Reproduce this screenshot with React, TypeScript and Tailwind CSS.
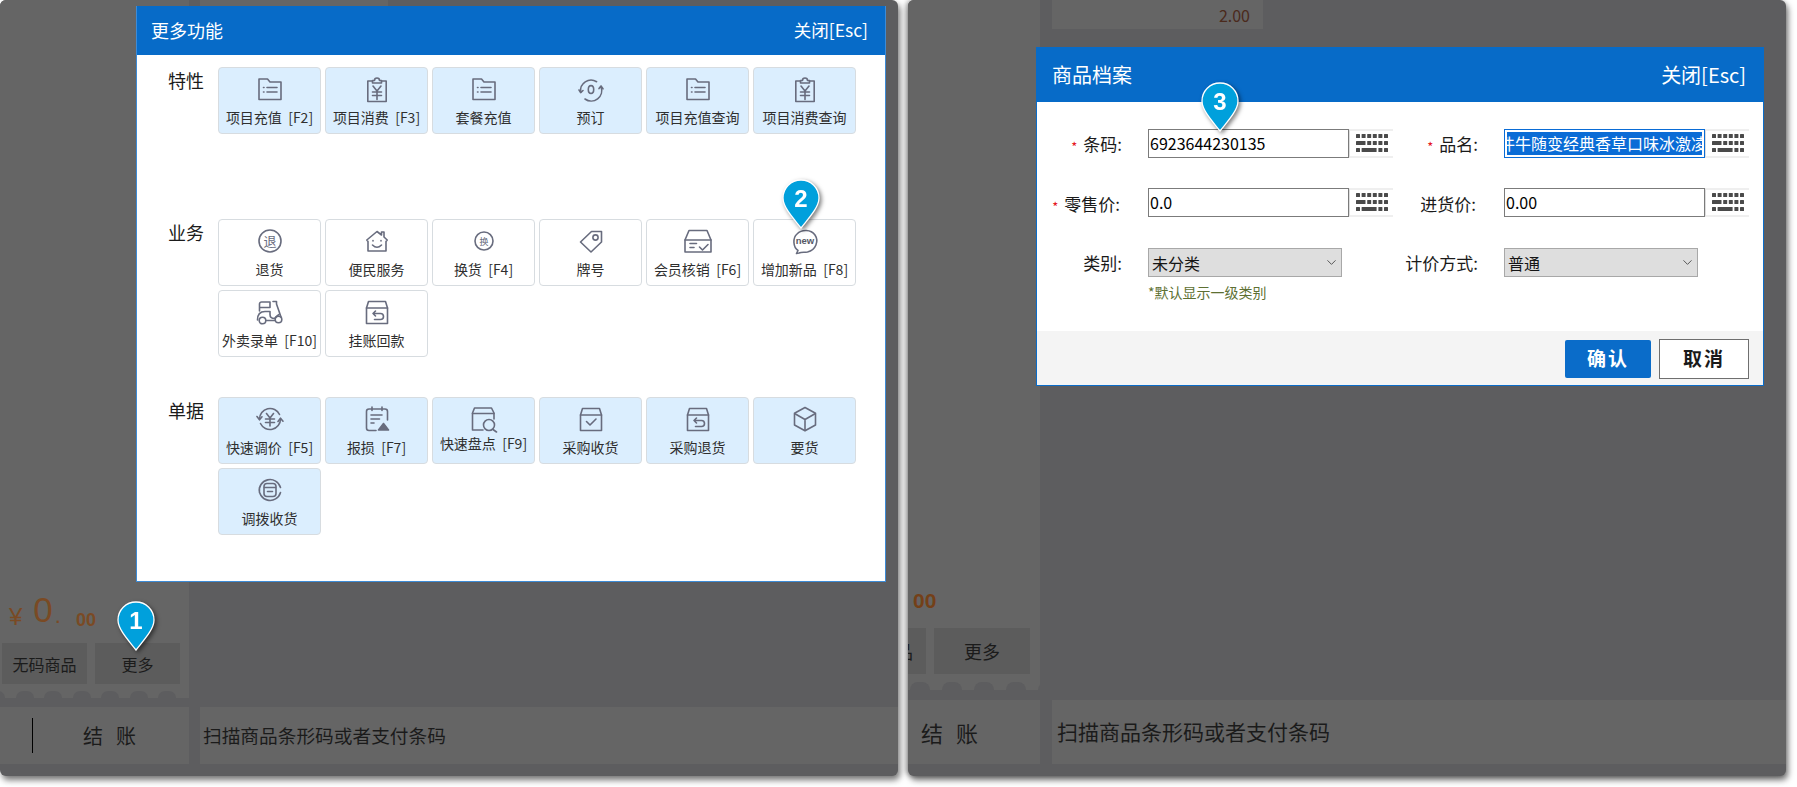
import React from "react";
import { ChevronDown } from "lucide-react";

const C = "#686c7e";
const base = { fill: "none", stroke: C, strokeWidth: 1.6, strokeLinecap: "round" as const, strokeLinejoin: "round" as const };
const Svg = ({ children }: { children: React.ReactNode }) => (
  <svg width="28" height="28" viewBox="0 0 28 28" {...base}>{children}</svg>
);

const IFolder = () => (
  <Svg>
    <path d="M3 24.5V4H11.5L14 7H25V24.5Z" />
    <path d="M7.5 12.5H8M7.5 17H8M11 12.5H21M11 17H21" />
  </Svg>
);
const IClip = () => (
  <Svg>
    <path d="M9.5 6H4.8V26.5H23.2V6H18.5" />
    <path d="M9.5 8V5.5H11.5A2.5 2.5 0 0 1 16.5 5.5H18.5V8Z" />
    <path d="M10 11L14 16L18 11M9.5 17H18.5M9.5 20.5H18.5M14 16V24.5" />
  </Svg>
);
const IOrder = () => (
  <Svg>
    <path d="M3.7 17.3A10.5 10.5 0 0 1 19.6 6.7" />
    <path d="M24 11.7A10.5 10.5 0 0 1 8 24" />
    <path d="M2 15L3.7 17.6L6 15.5M22 13.6L24 11L26 13.8" />
    <ellipse cx="14" cy="14.5" rx="2.7" ry="3.9" />
  </Svg>
);
const ITui = () => (
  <Svg>
    <circle cx="14" cy="14" r="11" />
    <text x="14" y="19" textAnchor="middle" fontSize="13" fill={C} stroke="none">退</text>
  </Svg>
);
const IHome = () => (
  <Svg>
    <path d="M5 14.5L3.8 13L14 4.5L18.5 8V5H21V10L24.2 13L23 14.5V24H5Z" />
    <path d="M10 13.5V14M18 13.5V14M9.5 18Q14 22.5 18.5 18" />
  </Svg>
);
const IHuan = () => (
  <Svg>
    <circle cx="14" cy="14" r="9" />
    <text x="14" y="17.5" textAnchor="middle" fontSize="9" fill={C} stroke="none">换</text>
  </Svg>
);
const ITag = () => (
  <Svg>
    <path d="M14.5 4.5H24.5V15L14 25L3.5 15Z" />
    <circle cx="18.5" cy="10.5" r="2.6" />
  </Svg>
);
const ICheckBox = () => (
  <Svg>
    <path d="M1 13L5 3.5H23L27 13V25H1Z" />
    <path d="M1 13H27M6 16.5H12.5M6 20.5H10M15.5 20L18.5 23L24 17.5" />
  </Svg>
);
const INew = () => (
  <Svg>
    <path d="M7 23.5C2 20 1.5 11 6 7C11 2 20 2.5 24 8C28 14 25 23 16.5 25C13 25.5 10.5 25 8 26L5.5 26.5Z" />
    <text x="14" y="17" textAnchor="middle" fontSize="9.5" fontWeight="700" fill="#555866" stroke="none" fontFamily="Liberation Sans">new</text>
  </Svg>
);
const IScooter = () => (
  <Svg>
    <path d="M3.5 13V6A2 2 0 0 1 5.5 4H14V9.5H3.5" />
    <path d="M17 3.5H20.5V6L25 19" />
    <path d="M1.5 22C1.5 17 4 13.5 9 13.5H14V16.5C14 19 16 20.5 18.5 20.5C20 19 21 17.5 23 16.5" />
    <path d="M10.5 22.5H18.5" />
    <circle cx="6.5" cy="22.5" r="3.3" />
    <circle cx="22.5" cy="21.5" r="3.3" />
  </Svg>
);
const IBoxBack = () => (
  <Svg>
    <path d="M3.5 10L5.5 3.5H22.5L24.5 10V25.5H3.5Z" />
    <path d="M3.5 10H24.5M10 15.5H17.5A3 3 0 0 1 17.5 21.5H11.5M12.5 13L10 15.5L12.5 18" />
  </Svg>
);
const IBoxCheck = () => (
  <Svg>
    <path d="M3.5 10L5.5 3.5H22.5L24.5 10V25.5H3.5Z" />
    <path d="M3.5 10H24.5M9.5 16.5L13 20L19 14" />
  </Svg>
);
const ICube = () => (
  <Svg>
    <path d="M14 2.5L24.5 8.3V20L14 25.8L3.5 20V8.3Z" />
    <path d="M4 8.8L14 14.5L24 8.8M14 14.5V25.5" />
  </Svg>
);
const IPrice = () => (
  <Svg>
    <path d="M3.5 14A10.5 10.5 0 0 1 23.5 9.5" />
    <path d="M24.5 14A10.5 10.5 0 0 1 4.5 18.5" />
    <path d="M1 11.5L3.5 14.8L6 11.8M22 16.5L24.5 13.2L27 16.2" />
    <path d="M10.5 8.5L14 13L17.5 8.5M9.5 14H18.5M9.5 17.5H18.5M14 13V21" />
  </Svg>
);
const IReport = () => (
  <Svg>
    <path d="M13 25.5H6A2.5 2.5 0 0 1 3.5 23V6.5A2.5 2.5 0 0 1 6 4H22A2.5 2.5 0 0 1 24.5 6.5V15" />
    <path d="M9 2V5.5M19 2V5.5M8 10H19M8 14H16.5M8 18H11" />
    <path d="M20.5 18.5L25.5 25H15.5Z" fill={C} />
  </Svg>
);
const IBoxSearch = () => (
  <Svg>
    <path d="M13 25H2.5V8L4.5 3H21.5L24 8V14" />
    <path d="M2.5 8.5H24" />
    <circle cx="19" cy="20" r="5.5" />
    <path d="M23 24.5L26.5 27" />
  </Svg>
);
const ITransfer = () => (
  <Svg>
    <path d="M3.5 16.5A10.8 10.8 0 0 1 24.5 11.5M24.5 16.5A10.8 10.8 0 0 1 3.5 11.5" />
    <rect x="8" y="7.5" width="12" height="13" rx="3" />
    <path d="M8.5 11.5H19.5M11.5 15.5H16.5" />
  </Svg>
);

type It = { t: string; i: React.ReactNode; up?: boolean };

const Btn = ({ it, blue }: { it: It; blue: boolean }) => (
  <div className={`h-[67px] flex flex-col items-center rounded-[4px] border border-[#d7dce0] ${blue ? "bg-[#dbeefe]" : "bg-white"}`}>
    <div className="mt-[7px] h-[28px] flex items-center justify-center">{it.i}</div>
    <div className={`${it.up ? "mt-[0px]" : "mt-[4px]"} h-[20px] leading-[20px] text-[14px] text-[#2f2f2f] whitespace-pre`}>{it.t}</div>
  </div>
);

const Section = ({ label, items, blue, cls }: { label: string; items: It[]; blue: boolean; cls: string }) => (
  <div className={`flex ${cls}`}>
    <div className="w-[81px] pl-[31px] text-[18px] leading-[27px] text-[#1b1b1b]">{label}</div>
    <div className="grid grid-cols-[repeat(6,103px)] gap-[4px]">
      {items.map((it) => (
        <Btn key={it.t} it={it} blue={blue} />
      ))}
    </div>
  </div>
);

const Pin = ({ n, cls }: { n: number; cls: string }) => (
  <svg className={`absolute drop-shadow-[2px_2px_2px_rgba(0,0,0,0.5)] ${cls}`} width="38" height="50" viewBox="0 0 38 50">
    <path
      d="M19 1C29 1 37 9 37 19C37 29 25 41 19 49C13 41 1 29 1 19C1 9 9 1 19 1Z"
      fill="#00a0dc"
      stroke="#ffffff"
      strokeWidth="1.3"
    />
    <text x="19" y="27.5" textAnchor="middle" fontSize="24" fontWeight="700" fill="#ffffff" fontFamily="Liberation Sans">{n}</text>
  </svg>
);

const Keyboard = () => (
  <div className="w-[44px] h-[29px] flex items-center justify-center border-y-2 border-[#efefef] border-l border-l-[#dddddd] bg-white">
    <svg width="32" height="19" viewBox="0 0 32 19" fill="#4a4a4a">
      {[0, 5.6, 11.2, 16.8, 22.4, 28].map((x) => (
        <rect key={x} x={x} y="0" width="4" height="4" rx="0.5" />
      ))}
      <rect x="0" y="7" width="9.5" height="4" rx="0.5" />
      {[11.2, 16.8, 22.4, 28].map((x) => (
        <rect key={x} x={x} y="7" width="4" height="4" rx="0.5" />
      ))}
      <rect x="0" y="14" width="4" height="4" rx="0.5" />
      <rect x="5.6" y="14" width="15" height="4" rx="0.5" />
      {[22.4, 28].map((x) => (
        <rect key={x} x={x} y="14" width="4" height="4" rx="0.5" />
      ))}
    </svg>
  </div>
);

const Label = ({ text, star, w, cls }: { text: string; star?: boolean; w: string; cls: string }) => (
  <div className={`${w} h-[29px] flex items-center justify-end gap-[6px] text-[17px] leading-[22px] text-[#1a1a1a] ${cls}`}>
    {star && <span className="text-[#e5141c] text-[13px] leading-none pt-[6px]">*</span>}
    <span>{text}</span>
  </div>
);

const Field = ({ v }: { v: string }) => (
  <div className="w-[201px] h-[29px] border border-[#7b7b7b] pl-[1px] pb-[2px] flex items-center text-[16px] leading-[20px] text-black">{v}</div>
);

const Sel = ({ v, cls }: { v: string; cls: string }) => (
  <div className={`w-[194px] h-[29px] bg-[#dedede] border border-[#a8a8a8] pl-[3px] pr-[2px] flex items-center justify-between text-[16px] leading-[20px] text-[#151515] ${cls}`}>
    <span>{v}</span>
    <ChevronDown size={15} color="#444444" strokeWidth={1.4} />
  </div>
);

const Bumps = ({ cls, bw }: { cls: string; bw: string }) => (
  <div className={`flex ${cls}`}>
    {[0, 1, 2, 3, 4, 5, 6].map((i) => (
      <div key={i} className={`${bw} h-full shrink-0 rounded-t-full bg-[#5d5d5f]`} />
    ))}
  </div>
);

const feature: It[] = [
  { t: "项目充值  [F2]", i: <IFolder /> },
  { t: "项目消费  [F3]", i: <IClip /> },
  { t: "套餐充值", i: <IFolder /> },
  { t: "预订", i: <IOrder /> },
  { t: "项目充值查询", i: <IFolder /> },
  { t: "项目消费查询", i: <IClip /> },
];
const biz: It[] = [
  { t: "退货", i: <ITui /> },
  { t: "便民服务", i: <IHome /> },
  { t: "换货  [F4]", i: <IHuan /> },
  { t: "牌号", i: <ITag /> },
  { t: "会员核销  [F6]", i: <ICheckBox /> },
  { t: "增加新品  [F8]", i: <INew /> },
  { t: "外卖录单  [F10]", i: <IScooter /> },
  { t: "挂账回款", i: <IBoxBack /> },
];
const docs: It[] = [
  { t: "快速调价  [F5]", i: <IPrice /> },
  { t: "报损  [F7]", i: <IReport /> },
  { t: "快速盘点  [F9]", i: <IBoxSearch />, up: true },
  { t: "采购收货", i: <IBoxCheck /> },
  { t: "采购退货", i: <IBoxBack /> },
  { t: "要货", i: <ICube /> },
  { t: "调拨收货", i: <ITransfer /> },
];

export default function App() {
  return (
    <div className="w-[1797px] h-[787px] overflow-hidden bg-white flex gap-[10px] font-['Noto_Sans_CJK_SC',sans-serif]">
      {/* left window */}
      <div className="relative w-[898px] h-[776px] shrink-0 bg-[#5d5d5f] rounded-[6px] shadow-[2px_4px_6px_rgba(0,0,0,0.55)]">
        <div className="flex h-[698px] gap-[11px]">
          <div className="w-[189px] h-full bg-[#656565] rounded-tl-[6px] flex flex-col justify-end overflow-hidden">
            <div className="flex items-end pl-[9px] mb-[12px] font-['Liberation_Sans',sans-serif] text-[#7a4a24]">
              <span className="text-[24px] leading-none mb-[2px]">¥</span>
              <span className="text-[35px] leading-none ml-[11px] mb-[4px]">0</span>
              <span className="text-[22px] leading-none ml-[2px] mb-[4px]">.</span>
              <span className="text-[18px] font-bold leading-none ml-[15px] mb-[2px]">00</span>
            </div>
            <div className="flex gap-[8px] pl-[2px] text-[16px] text-[#1b1b1b]">
              <div className="w-[85px] h-[41px] bg-[#5c5c5c] flex items-center justify-center">无码商品</div>
              <div className="w-[85px] h-[41px] bg-[#5c5c5c] flex items-center justify-center">更多</div>
            </div>
            <Bumps cls="h-[7px] mt-[7px] -ml-[13px] gap-[10.5px]" bw="w-[18px]" />
          </div>
          <div className="w-[188px] h-[30px] bg-[#656565]" />
        </div>
        <div className="flex mt-[9px] h-[57px] gap-[11px]">
          <div className="w-[189px] bg-[#656565] flex items-center text-[20px] text-[#1b1b1b]">
            <div className="w-px h-[35px] bg-black ml-[32px]" />
            <span className="ml-[50px]">结</span>
            <span className="ml-[13px]">账</span>
          </div>
          <div className="flex-1 bg-[#656565] flex items-center pl-[3px] text-[18.7px] text-[#1b1b1b]">扫描商品条形码或者支付条码</div>
        </div>

        {/* modal: more functions */}
        <div className="absolute left-[136px] top-[6px] w-[750px] h-[576px] bg-white border border-[#3d8bd6] border-t-0 flex flex-col">
          <div className="h-[49px] bg-[#076bc8] flex items-center justify-between pl-[14px] pr-[17px] text-white">
            <span className="text-[18px]">更多功能</span>
            <span className="text-[17.5px]">关闭[Esc]</span>
          </div>
          <Section cls="mt-[12px]" label="特性" items={feature} blue />
          <Section cls="mt-[85px]" label="业务" items={biz} blue={false} />
          <Section cls="mt-[40px]" label="单据" items={docs} blue />
        </div>

        <Pin n={1} cls="left-[117px] top-[601px]" />
        <Pin n={2} cls="left-[782px] top-[179px]" />
      </div>

      {/* right window */}
      <div className="relative w-[878px] h-[776px] shrink-0 bg-[#5d5d5f] rounded-[6px] shadow-[2px_4px_6px_rgba(0,0,0,0.55),-2px_0_5px_rgba(0,0,0,0.35)]">
        <div className="flex h-[690px] gap-[12px]">
          <div className="w-[132px] h-full bg-[#656565] rounded-tl-[6px] flex flex-col justify-end overflow-hidden">
            <div className="pl-[5px] mb-[17px] text-[21px] font-bold leading-none text-[#744018] font-['Liberation_Sans',sans-serif]">00</div>
            <div className="flex gap-[8px] text-[18px] text-[#1b1b1b]">
              <div className="w-[18px] h-[46px] bg-[#5c5c5c] flex items-center justify-end pr-[13px] overflow-hidden whitespace-nowrap">
                <span className="shrink-0">无码商品</span>
              </div>
              <div className="w-[96px] h-[46px] bg-[#5c5c5c] flex items-center justify-center">更多</div>
            </div>
            <Bumps cls="h-[8px] mt-[8px] ml-[2px] gap-[12px]" bw="w-[20px]" />
          </div>
          <div className="w-[211px] h-[29px] bg-[#656565] flex items-center justify-end pr-[13px] text-[16px] text-[#4b2a1c]">2.00</div>
        </div>
        <div className="flex mt-[10px] h-[64px] gap-[12px]">
          <div className="w-[132px] bg-[#656565] flex items-center text-[22px] text-[#1b1b1b]">
            <span className="ml-[13px]">结</span>
            <span className="ml-[13px]">账</span>
          </div>
          <div className="flex-1 bg-[#656565] flex items-center pl-[5px] text-[21px] text-[#1b1b1b]">扫描商品条形码或者支付条码</div>
        </div>

        {/* modal: product record */}
        <div className="absolute left-[128px] top-[47px] w-[728px] h-[339px] bg-white border border-[#0a6cc9] flex flex-col">
          <div className="h-[55px] -mt-px -mx-px bg-[#076bc8] flex items-center justify-between pl-[16px] pr-[18px] text-white text-[20px] shrink-0">
            <span>商品档案</span>
            <span>关闭[Esc]</span>
          </div>
          <div className="flex-1 pt-[27px]">
            <div className="flex">
              <Label text="条码:" star w="w-[111px]" cls="pr-[26px]" />
              <Field v="6923644230135" />
              <Keyboard />
              <Label text="品名:" star w="w-[111px]" cls="pr-[26px]" />
              <div className="w-[201px] h-[29px] border border-[#0a6cd6] p-[2px] overflow-hidden">
                <div className="h-full bg-[#0a6cd6] text-white text-[16px] leading-[23px] overflow-hidden whitespace-nowrap">
                  <span className="-ml-[8px] inline-block">件牛随变经典香草口味冰激凌</span>
                </div>
              </div>
              <Keyboard />
            </div>
            <div className="flex mt-[30px]">
              <Label text="零售价:" star w="w-[111px]" cls="pr-[28px] pt-[2px]" />
              <Field v="0.0" />
              <Keyboard />
              <Label text="进货价:" w="w-[111px]" cls="pr-[28px] pt-[2px]" />
              <Field v="0.00" />
              <Keyboard />
            </div>
            <div className="flex mt-[31px]">
              <Label text="类别:" w="w-[111px]" cls="pr-[26px]" />
              <Sel v="未分类" cls="mr-[51px]" />
              <Label text="计价方式:" w="w-[111px]" cls="pr-[26px]" />
              <Sel v="普通" cls="" />
            </div>
            <div className="ml-[111px] mt-[6px] text-[14px] leading-[18px] text-[#5d7032]">*默认显示一级类别</div>
          </div>
          <div className="h-[54px] bg-[#f4f4f4] flex items-center justify-end pr-[14px] pt-[1px] gap-[8px] text-[19px] font-bold shrink-0">
            <div className="w-[86px] h-[38px] rounded-[2px] bg-[#0a6cc9] text-white flex items-center justify-center tracking-[2px]">确认</div>
            <div className="w-[90px] h-[40px] bg-white border border-[#6f6f6f] text-[#1a1a1a] flex items-center justify-center tracking-[2px]">取消</div>
          </div>
        </div>

        <Pin n={3} cls="left-[293px] top-[82px]" />
      </div>
    </div>
  );
}
